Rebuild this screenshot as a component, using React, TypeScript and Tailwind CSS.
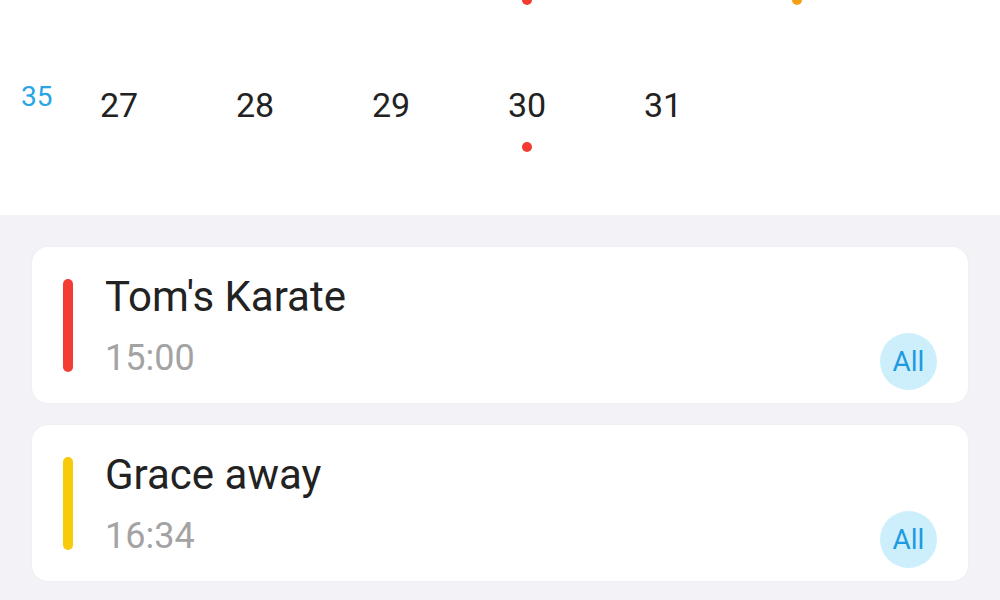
import React from "react";

const font = { fontFamily: "Roboto, 'Noto Sans', sans-serif" };

function Card({ title, time, color }: { title: string; time: string; color: string }) {
  return (
    <div className="relative flex h-[156px] rounded-[16px] bg-white pl-[31px] shadow-[0_0_3px_rgba(0,0,0,0.04)]">
      <div className={`mt-[32px] h-[93px] w-[10px] rounded-full ${color}`} />
      <div className="ml-[32px] flex flex-1 flex-col pt-[25px]">
        <div className="text-[42px] leading-[50px] text-[#222222]">{title}</div>
        <div className="mt-[14px] text-[36px] leading-[44px] text-[#a3a3a3]">{time}</div>
      </div>
      <div className="mb-[13px] mr-[31px] flex h-[57px] w-[57px] items-center justify-center self-end rounded-full bg-[#cdeffc] text-[28px] text-[#1e9be0]">
        All
      </div>
    </div>
  );
}

export default function App() {
  const days = ["27", "28", "29", "30", "31", "", ""];
  return (
    <div className="h-[600px] w-[1000px] overflow-hidden bg-[#f3f3f7]" style={font}>
      <div className="h-[215px] overflow-hidden bg-white">
        <div className="grid h-[5px] grid-cols-[51px_repeat(7,136px)] overflow-hidden">
          <div />
          <div />
          <div />
          <div />
          <div className="flex justify-center">
            <div className="-mt-[5px] h-[10px] w-[10px] rounded-full bg-[#f33b30]" />
          </div>
          <div />
          <div className="flex justify-center">
            <div className="-mt-[5px] mr-[4px] h-[10px] w-[10px] rounded-full bg-[#f5a012]" />
          </div>
          <div />
        </div>
        <div className="grid grid-cols-[51px_repeat(7,136px)] pt-[78px]">
          <div className="whitespace-nowrap pl-[21px] text-[28px] leading-[28px] text-[#2aa5e4]">35</div>
          {days.map((d, i) => (
            <div key={i} className="flex flex-col items-center pt-[2px]">
              <div className="h-[40px] text-[34px] leading-[40px] text-[#222222]">{d}</div>
              {d === "30" && <div className="mt-[17px] h-[10px] w-[10px] rounded-full bg-[#f33b30]" />}
            </div>
          ))}
        </div>
      </div>
      <div className="flex flex-col gap-[22px] px-[32px] pt-[32px]">
        <Card title="Tom's Karate" time="15:00" color="bg-[#f33d33]" />
        <Card title="Grace away" time="16:34" color="bg-[#f8ca0c]" />
      </div>
    </div>
  );
}
